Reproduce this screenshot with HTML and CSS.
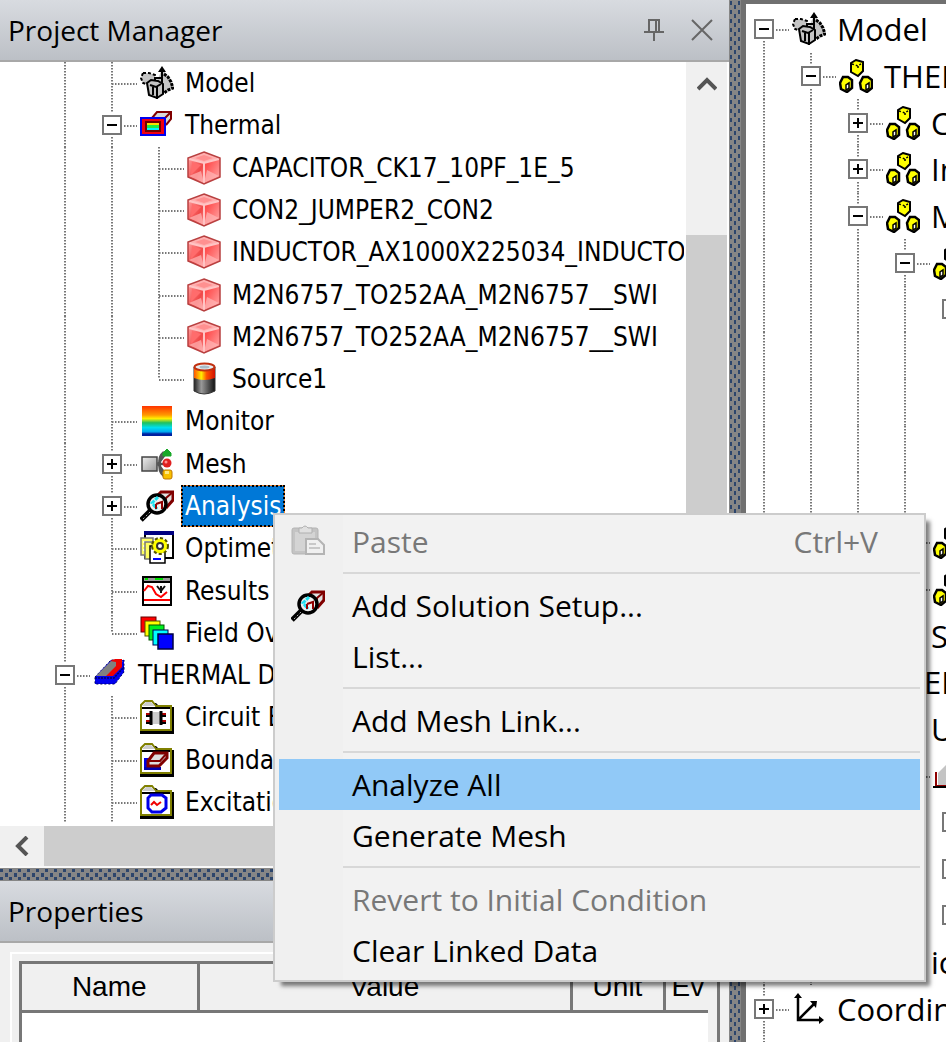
FILE: index.html
```html
<!DOCTYPE html>
<html lang="en">
<head>
  <meta charset="UTF-8">
  <meta name="viewport" content="width=device-width, initial-scale=1.0">
  <title>Project Manager</title>
  <link rel="stylesheet" href="styles.css">
</head>
<body>
  <!-- shared icons -->
  <svg class="sprite" aria-hidden="true">
    <defs>
      <linearGradient id="rainbow" x1="0" y1="0" x2="0" y2="1">
        <stop offset="0" stop-color="#ff3300"/>
        <stop offset=".3" stop-color="#ff9900"/>
        <stop offset=".42" stop-color="#fff000"/>
        <stop offset=".56" stop-color="#20c060"/>
        <stop offset=".72" stop-color="#00e0f0"/>
        <stop offset=".86" stop-color="#00a8f0"/>
        <stop offset=".93" stop-color="#0020a0"/>
        <stop offset="1" stop-color="#0020a0"/>
      </linearGradient>
      <linearGradient id="cubeL" x1="0" y1="0" x2="1" y2="1">
        <stop offset="0" stop-color="#ff9c9c"/>
        <stop offset=".6" stop-color="#f04848"/>
        <stop offset="1" stop-color="#ff9090"/>
      </linearGradient>
      <linearGradient id="cubeR" x1="0" y1="0" x2="1" y2="1">
        <stop offset="0" stop-color="#ff3434"/>
        <stop offset="1" stop-color="#ffb0b0"/>
      </linearGradient>
      <linearGradient id="battery" x1="0" y1="0" x2="1" y2="0">
        <stop offset="0" stop-color="#222"/>
        <stop offset=".35" stop-color="#999"/>
        <stop offset="1" stop-color="#111"/>
      </linearGradient>
      <linearGradient id="batteryTop" x1="0" y1="0" x2="1" y2="0">
        <stop offset="0" stop-color="#ff5500"/>
        <stop offset=".35" stop-color="#ffee00"/>
        <stop offset=".6" stop-color="#ff5000"/>
        <stop offset="1" stop-color="#d01000"/>
      </linearGradient>
      <linearGradient id="steel" x1="0" y1="0" x2="1" y2="1">
        <stop offset="0" stop-color="#eee"/>
        <stop offset="1" stop-color="#999"/>
      </linearGradient>
    </defs>
    <symbol id="i-model" viewBox="0 0 34 34">
      <path d="M3 7H9L15 9V16L9 19L3 17L1 12Z" fill="#c4c4c4" stroke="#000" stroke-width="2" stroke-dasharray="3 2"/>
      <path d="M22 3L17 15L21 27L27 25L33 22L31 15L27 9Z" fill="#c4c4c4"/>
      <path d="M24 8L28 11L31 16L33 22L28 24L24 27" fill="none" stroke="#000" stroke-width="3" stroke-dasharray="3 1"/>
      <path d="M7 17L11 14L18 15L23 18V28L17 32L9 29Z" fill="#c4c4c4" stroke="#000" stroke-width="2"/>
      <path d="M10 19L16 21L21 18M17 21V33M13 21V29" fill="none" stroke="#000" stroke-width="2"/>
      <path d="M22 0L18 6H26Z" fill="#000"/>
      <path d="M22 4V18M14 12H22" fill="none" stroke="#000" stroke-width="2"/>
    </symbol>
    <symbol id="i-thermal" viewBox="0 0 34 34">
      <path d="M12 10L17 4H31V11L26 17" fill="#d8d8d8" stroke="#800000" stroke-width="2"/>
      <path d="M31 4L25 10H12" fill="none" stroke="#800000" stroke-width="2"/>
      <rect x="1" y="10" width="24" height="17" fill="#f00010" stroke="#0000f0" stroke-width="2"/>
      <rect x="6" y="14" width="14" height="9" fill="#00f8ff" stroke="#700000" stroke-width="2"/>
      <rect x="7" y="15" width="12" height="2" fill="#ffe000"/>
      <rect x="7" y="17" width="12" height="3" fill="#20f040"/>
    </symbol>
    <symbol id="i-cube" viewBox="0 0 34 34">
      <path d="M1 7L17 12V33L1 26Z" fill="url(#cubeL)"/>
      <path d="M33 7L17 12V33L33 26Z" fill="url(#cubeR)"/>
      <path d="M17 1L33 7L17 12L1 7Z" fill="#ffb0b0"/>
      <path d="M17 4L26 7L17 10L8 7Z" fill="#ff9090"/>
      <path d="M5 11L14 14L4 24Z" fill="#ff6c6c"/>
      <path d="M2 25L14 20L17 32ZM32 25L20 19L17 32Z" fill="#ffb8b8" opacity=".7"/>
      <path d="M2 8L17 12L32 8M17 12V32" fill="none" stroke="#ffc4c4" stroke-width="2"/>
      <path d="M17 1L33 7V26L17 33L1 26V7Z" fill="none" stroke="#b84040" stroke-width="1.5"/>
    </symbol>
    <symbol id="i-source" viewBox="0 0 34 34">
      <path d="M7 5V29Q17 35 28 29V5Z" fill="url(#battery)" stroke="#333"/>
      <path d="M7 5V16Q17 20 28 16V5Z" fill="url(#batteryTop)"/>
      <ellipse cx="17.5" cy="5" rx="10" ry="3.5" fill="#e8eef2" stroke="#c03010" stroke-width="2"/>
      <ellipse cx="17.5" cy="5" rx="5" ry="1.5" fill="#a8bcc8"/>
    </symbol>
    <symbol id="i-monitor" viewBox="0 0 34 34">
      <rect x="2" y="2" width="30" height="30" fill="url(#rainbow)"/>
    </symbol>
    <symbol id="i-mesh" viewBox="0 0 34 34">
      <path d="M18 17L26 6M18 17H26M18 17L26 28M24 5Q18 10 20 17Q18 24 24 29" fill="none" stroke="#555" stroke-width="2.5"/>
      <rect x="2" y="10" width="15" height="14" fill="url(#steel)" stroke="#444" stroke-width="1.5"/>
      <path d="M27 2L31 6V9H23V6Z" fill="#18a828" stroke="#18a828"/>
      <circle cx="27" cy="16" r="4.5" fill="#e02020"/>
      <circle cx="26" cy="15" r="1.5" fill="#ff9090"/>
      <rect x="23" y="23" width="9" height="9" rx="2" fill="#f8c000" stroke="#c07800"/>
      <rect x="25" y="24" width="4" height="3" fill="#ffe880"/>
    </symbol>
    <symbol id="i-analysis" viewBox="0 0 34 34">
      <path d="M16 8L21 3H33V11L26 19" fill="#e0e0e0" stroke="#800000" stroke-width="3"/>
      <path d="M33 3L26 9V18" fill="none" stroke="#800000" stroke-width="2"/>
      <path d="M1 31L10 22" stroke="#000" stroke-width="5"/>
      <path d="M3 30L10 23" stroke="#aaa" stroke-width="1" stroke-dasharray="2 2"/>
      <circle cx="17" cy="15" r="9" fill="#f0f0f0" stroke="#000" stroke-width="3.5"/>
      <path d="M18 8L12 14L17 20" fill="none" stroke="#20e0f0" stroke-width="3" stroke-dasharray="4 1"/>
      <path d="M16 15L22 13V20M16 15V20" fill="none" stroke="#900000" stroke-width="2"/>
    </symbol>
    <symbol id="i-opti" viewBox="0 0 34 34">
      <rect x="5" y="1" width="28" height="26" fill="#fff" stroke="#000" stroke-width="2"/>
      <rect x="4" y="0" width="30" height="4" fill="#000080"/>
      <rect x="1" y="7" width="12" height="17" fill="#ffff60" stroke="#777" stroke-width="1.5"/>
      <path d="M3 11H11M3 15H9M3 19H9" stroke="#fff" stroke-width="1.5"/>
      <rect x="5" y="11" width="12" height="17" fill="#ffff60" stroke="#777" stroke-width="1.5"/>
      <path d="M10 15H18V18H25V32H10Z" fill="#fff" stroke="#000" stroke-width="1.5"/>
      <circle cx="20" cy="15" r="7.5" fill="#ff0" stroke="#555500" stroke-width="3" stroke-dasharray="3 2"/>
      <circle cx="20" cy="15" r="7" fill="#ff0"/>
      <circle cx="20" cy="15" r="3" fill="#fff" stroke="#333" stroke-width="2"/>
      <path d="M13 28H21" stroke="#0000ff" stroke-width="2"/>
    </symbol>
    <symbol id="i-results" viewBox="0 0 34 34">
      <rect x="3" y="3" width="28" height="28" fill="#fff" stroke="#000" stroke-width="2"/>
      <rect x="4" y="4" width="26" height="3" fill="#999"/>
      <path d="M5 5H8M15 5H23" stroke="#00e000" stroke-width="2"/>
      <path d="M3 8H31" stroke="#000" stroke-width="2"/>
      <path d="M4 17L8 12L12 13L16 20L21 23L27 18" fill="none" stroke="#f00" stroke-width="2"/>
      <path d="M17 12L21 17L25 12M21 12V19" fill="none" stroke="#111" stroke-width="2"/>
      <path d="M4 26H30" stroke="#f00" stroke-width="2"/>
    </symbol>
    <symbol id="i-field" viewBox="0 0 34 34">
      <rect x="1" y="1" width="15" height="15" fill="#f00" stroke="#600"/>
      <rect x="5" y="5" width="15" height="15" fill="#ff0" stroke="#550"/>
      <rect x="9" y="9" width="15" height="15" fill="#00f020" stroke="#050"/>
      <rect x="13" y="14" width="15" height="15" fill="#0ff" stroke="#005"/>
      <rect x="18" y="18" width="15" height="15" fill="#00f" stroke="#004" stroke-width="1.5"/>
    </symbol>
    <symbol id="i-design" viewBox="0 0 34 34">
      <path d="M2 19L18 2H31V14L22 26H2Z" fill="#0000f0" stroke="#000060" stroke-dasharray="2 2"/>
      <path d="M3 18L18 3H30L16 18Z" fill="#808080"/>
      <path d="M17 3L22 1H29V9L20 18H13L23 8V4Z" fill="#f00000"/>
      <path d="M2 20H21L31 9" fill="none" stroke="#000060" stroke-width="1.5" stroke-dasharray="2 1"/>
    </symbol>
    <symbol id="i-folder" viewBox="0 0 34 34">
      <path d="M6 3H16L20 7H34V34H0V30H2V8Z" fill="#000"/>
      <path d="M1 30V5L5 1H12L16 6H31V30Z" fill="#fff" stroke="#808000" stroke-width="2"/>
      <path d="M2 6L6 2H11L15 6Z" fill="#ccc"/>
      <path d="M2 8H30" stroke="#000" stroke-width="2"/>
    </symbol>
    <symbol id="i-circuit" viewBox="0 0 34 34">
      <use href="#i-folder"/>
      <path d="M6 14H13M19 14H26M6 21H13M19 21H26" stroke="#b00000" stroke-width="2"/>
      <path d="M6 16H10M22 16H26M6 23H10M22 23H26" stroke="#000" stroke-width="2"/>
      <rect x="12" y="12" width="8" height="12" fill="#ccc"/>
      <path d="M11 11V25M21 11V25" stroke="#000" stroke-width="3"/>
    </symbol>
    <symbol id="i-bound" viewBox="0 0 34 34">
      <use href="#i-folder"/>
      <path d="M4 15H13L8 20V26H18L14 27H4Z" fill="#0000e0"/>
      <path d="M4 24H21V27H4Z" fill="#0000b0"/>
      <path d="M8 18L14 10H27V15L19 23H8Z" fill="#ddd" stroke="#800000" stroke-width="3"/>
      <path d="M8 18H20L27 10" fill="none" stroke="#800000" stroke-width="2"/>
    </symbol>
    <symbol id="i-excite" viewBox="0 0 34 34">
      <use href="#i-folder"/>
      <path d="M11 10H22L26 13V23L21 27H12L8 23V13Z" fill="#fff" stroke="#0000e8" stroke-width="3"/>
      <path d="M11 20L14 17L17 20L21 17" fill="none" stroke="#f00000" stroke-width="2"/>
    </symbol>
    <symbol id="i-part" viewBox="0 0 34 34">
      <path d="M12 4L17 1L24 3V12L19 17L12 13Z" fill="#ff0" stroke="#000" stroke-width="2"/>
      <path d="M13 5L19 7L23 4M19 7V11" fill="none" stroke="#000" stroke-width="1.5" stroke-dasharray="2 2"/>
      <path d="M1 24L4 18H9L13 21V29L8 33L2 30Z" fill="#ff0" stroke="#000" stroke-width="2.5"/>
      <path d="M7 31V26L10 24V29Z" fill="#fff" stroke="#000" stroke-width="1.5"/>
      <path d="M21 24L24 18H29L33 21V29L28 33L22 30Z" fill="#ff0" stroke="#000" stroke-width="2.5"/>
      <path d="M27 31V26L30 24V29Z" fill="#fff" stroke="#000" stroke-width="1.5"/>
    </symbol>
    <symbol id="i-sheet" viewBox="0 0 34 34">
      <path d="M5 14L14 5H34V26H5Z" fill="#c4c4c4"/>
      <path d="M3 13V27H34" fill="none" stroke="#900000" stroke-width="2"/>
      <path d="M0 28H34" stroke="#000" stroke-width="2"/>
    </symbol>
    <symbol id="i-axes" viewBox="0 0 34 34">
      <path d="M6 5V28H30M6 28L22 12" fill="none" stroke="#000" stroke-width="2.5"/>
      <path d="M6 1L2 6H10ZM32 28L27 24V32ZM25 9H18L24 16Z" fill="#000"/>
    </symbol>
    <symbol id="i-paste" viewBox="0 0 34 34">
      <rect x="1" y="3" width="26" height="26" rx="2" fill="#c4c4c4" stroke="#b4b4b4"/>
      <rect x="4" y="7" width="20" height="19" fill="#d4d4d4"/>
      <path d="M8 3H11Q14 -1 17 3H21V8H8Z" fill="#e0e0e0" stroke="#b0b0b0"/>
      <path d="M15 14H27L33 20V29H15Z" fill="#f0f0f0" stroke="#b4b4b4" stroke-width="2"/>
      <path d="M18 19H25M18 23H29" stroke="#c8c8c8" stroke-width="2"/>
    </symbol>
  </svg>

  <div class="app">
    <div class="side">
      <section class="panel project">
        <header class="titlebar">
          <h2>Project Manager</h2>
          <button type="button" class="tool" aria-label="Auto hide">
            <svg viewBox="0 0 22 24"><path d="M6 13V2H16V13M13 2V13M1 14H21M11 14V23" fill="none" stroke="#666" stroke-width="2"/></svg>
          </button>
          <button type="button" class="tool" aria-label="Close">
            <svg viewBox="0 0 22 24"><path d="M1 2L21 22M21 2L1 22" fill="none" stroke="#666" stroke-width="2"/></svg>
          </button>
        </header>
        <div class="scroll-area">
          <ul class="tree" role="tree" aria-label="Project">
            <li class="row" role="treeitem"><i class="g v"></i><i class="g v h"></i><svg class="icon"><use href="#i-model"/></svg><span class="label">Model</span></li>
            <li class="row" role="treeitem"><i class="g v"></i><i class="g v h"><button type="button" class="toggle" aria-label="Collapse"></button></i><svg class="icon"><use href="#i-thermal"/></svg><span class="label">Thermal</span></li>
            <li class="row" role="treeitem"><i class="g v"></i><i class="g v"></i><i class="g v h"></i><svg class="icon"><use href="#i-cube"/></svg><span class="label">CAPACITOR_CK17_10PF_1E_5</span></li>
            <li class="row" role="treeitem"><i class="g v"></i><i class="g v"></i><i class="g v h"></i><svg class="icon"><use href="#i-cube"/></svg><span class="label">CON2_JUMPER2_CON2</span></li>
            <li class="row" role="treeitem"><i class="g v"></i><i class="g v"></i><i class="g v h"></i><svg class="icon"><use href="#i-cube"/></svg><span class="label">INDUCTOR_AX1000X225034_INDUCTOR</span></li>
            <li class="row" role="treeitem"><i class="g v"></i><i class="g v"></i><i class="g v h"></i><svg class="icon"><use href="#i-cube"/></svg><span class="label">M2N6757_TO252AA_M2N6757__SWI</span></li>
            <li class="row" role="treeitem"><i class="g v"></i><i class="g v"></i><i class="g v h"></i><svg class="icon"><use href="#i-cube"/></svg><span class="label">M2N6757_TO252AA_M2N6757__SWI</span></li>
            <li class="row" role="treeitem"><i class="g v"></i><i class="g v"></i><i class="g v end h"></i><svg class="icon"><use href="#i-source"/></svg><span class="label">Source1</span></li>
            <li class="row" role="treeitem"><i class="g v"></i><i class="g v h"></i><svg class="icon"><use href="#i-monitor"/></svg><span class="label">Monitor</span></li>
            <li class="row" role="treeitem"><i class="g v"></i><i class="g v h"><button type="button" class="toggle plus" aria-label="Expand"></button></i><svg class="icon"><use href="#i-mesh"/></svg><span class="label">Mesh</span></li>
            <li class="row" role="treeitem" aria-selected="true"><i class="g v"></i><i class="g v h"><button type="button" class="toggle plus" aria-label="Expand"></button></i><svg class="icon"><use href="#i-analysis"/></svg><span class="label selected">Analysis</span></li>
            <li class="row" role="treeitem"><i class="g v"></i><i class="g v h"></i><svg class="icon"><use href="#i-opti"/></svg><span class="label">Optimetrics</span></li>
            <li class="row" role="treeitem"><i class="g v"></i><i class="g v h"></i><svg class="icon"><use href="#i-results"/></svg><span class="label">Results</span></li>
            <li class="row" role="treeitem"><i class="g v"></i><i class="g v end h"></i><svg class="icon"><use href="#i-field"/></svg><span class="label">Field Overlays</span></li>
            <li class="row" role="treeitem"><i class="g v h"><button type="button" class="toggle" aria-label="Collapse"></button></i><svg class="icon"><use href="#i-design"/></svg><span class="label">THERMAL D</span></li>
            <li class="row" role="treeitem"><i class="g v"></i><i class="g v h"></i><svg class="icon"><use href="#i-circuit"/></svg><span class="label">Circuit Elements</span></li>
            <li class="row" role="treeitem"><i class="g v"></i><i class="g v h"></i><svg class="icon"><use href="#i-bound"/></svg><span class="label">Boundaries</span></li>
            <li class="row" role="treeitem"><i class="g v"></i><i class="g v h"></i><svg class="icon"><use href="#i-excite"/></svg><span class="label">Excitations</span></li>
          </ul>
          <div class="vbar">
            <button type="button" class="arrow" aria-label="Scroll up">
              <svg viewBox="0 0 20 14"><path d="M1 12L10 3L19 12" fill="none" stroke="#555" stroke-width="4"/></svg>
            </button>
            <div class="thumb"></div>
          </div>
        </div>
        <div class="hbar">
          <button type="button" class="arrow" aria-label="Scroll left">
            <svg viewBox="0 0 14 20"><path d="M12 1L3 10L12 19" fill="none" stroke="#555" stroke-width="4"/></svg>
          </button>
          <div class="thumb"></div>
        </div>
      </section>

      <div class="splitter-h"></div>

      <section class="panel properties">
        <header class="titlebar">
          <h2>Properties</h2>
        </header>
        <div class="sheet">
          <div class="frame">
            <table>
              <thead>
                <tr><th class="c-name">Name</th><th>Value</th><th class="c-unit">Unit</th><th class="c-eval">Ev</th></tr>
              </thead>
            </table>
          </div>
        </div>
      </section>
    </div>

    <div class="splitter-v"></div>

    <section class="model-pane">
      <ul class="tree" role="tree" aria-label="Model">
        <li class="row" role="treeitem"><i class="g v start h"><button type="button" class="toggle" aria-label="Collapse"></button></i><svg class="icon"><use href="#i-model"/></svg><span class="label">Model</span></li>
        <li class="row" role="treeitem"><i class="g v"></i><i class="g v h"><button type="button" class="toggle" aria-label="Collapse"></button></i><svg class="icon"><use href="#i-part"/></svg><span class="label">THERMAL</span></li>
        <li class="row" role="treeitem"><i class="g v"></i><i class="g v"></i><i class="g v h"><button type="button" class="toggle plus" aria-label="Expand"></button></i><svg class="icon"><use href="#i-part"/></svg><span class="label">C</span></li>
        <li class="row" role="treeitem"><i class="g v"></i><i class="g v"></i><i class="g v h"><button type="button" class="toggle plus" aria-label="Expand"></button></i><svg class="icon"><use href="#i-part"/></svg><span class="label">In</span></li>
        <li class="row" role="treeitem"><i class="g v"></i><i class="g v"></i><i class="g v h"><button type="button" class="toggle" aria-label="Collapse"></button></i><svg class="icon"><use href="#i-part"/></svg><span class="label">M</span></li>
        <li class="row" role="treeitem"><i class="g v"></i><i class="g v"></i><i class="g v"></i><i class="g v h"><button type="button" class="toggle" aria-label="Collapse"></button></i><svg class="icon"><use href="#i-part"/></svg></li>
        <li class="row" role="treeitem"><i class="g v"></i><i class="g v"></i><i class="g v"></i><i class="g v"></i><i class="g v"><button type="button" class="toggle" aria-label="Collapse"></button></i></li>
        <li class="row" role="treeitem"><i class="g v"></i><i class="g v"></i><i class="g v"></i><i class="g v"></i></li>
        <li class="row" role="treeitem"><i class="g v"></i><i class="g v"></i><i class="g v"></i><i class="g v"></i></li>
        <li class="row" role="treeitem"><i class="g v"></i><i class="g v"></i><i class="g v"></i><i class="g v"></i></li>
        <li class="row" role="treeitem"><i class="g v"></i><i class="g v"></i><i class="g v"></i><i class="g v"></i></li>
        <li class="row" role="treeitem"><i class="g v"></i><i class="g v"></i><i class="g v"></i><i class="g v h"></i><svg class="icon"><use href="#i-part"/></svg></li>
        <li class="row" role="treeitem"><i class="g v"></i><i class="g v"></i><i class="g v"></i><i class="g v end h"></i><svg class="icon"><use href="#i-part"/></svg></li>
        <li class="row" role="treeitem"><i class="g v"></i><i class="g v"></i><i class="g v h"></i><svg class="icon"><use href="#i-part"/></svg><span class="label">S</span></li>
        <li class="row" role="treeitem"><i class="g v"></i><i class="g v h"></i><svg class="icon"><use href="#i-part"/></svg><span class="label">THERMAL</span></li>
        <li class="row" role="treeitem"><i class="g v"></i><i class="g v"></i><i class="g v h"></i><svg class="icon"><use href="#i-part"/></svg><span class="label">U</span></li>
        <li class="row" role="treeitem"><i class="g v"></i><i class="g v"></i><i class="g v"></i><i class="g v h"></i><svg class="icon"><use href="#i-sheet"/></svg></li>
        <li class="row" role="treeitem"><i class="g v"></i><i class="g v"></i><i class="g v"></i><i class="g v"></i><i class="g v"><button type="button" class="toggle plus" aria-label="Expand"></button></i></li>
        <li class="row" role="treeitem"><i class="g v"></i><i class="g v"></i><i class="g v"></i><i class="g v"></i><i class="g v"><button type="button" class="toggle plus" aria-label="Expand"></button></i></li>
        <li class="row" role="treeitem"><i class="g v"></i><i class="g v"></i><i class="g v"></i><i class="g v"></i><i class="g v"><button type="button" class="toggle plus" aria-label="Expand"></button></i></li>
        <li class="row" role="treeitem"><i class="g v"></i><i class="g v"></i><i class="g h"></i><i class="g"></i><span class="label">ic</span></li>
        <li class="row" role="treeitem"><i class="g v h"><button type="button" class="toggle plus" aria-label="Expand"></button></i><svg class="icon"><use href="#i-axes"/></svg><span class="label">Coordinate Systems</span></li>
        <li class="row tail" role="presentation"><i class="g v"></i></li>
      </ul>
    </section>
  </div>

  <div class="menu" role="menu">
    <button type="button" role="menuitem" disabled><svg class="icon"><use href="#i-paste"/></svg><span>Paste</span><kbd>Ctrl+V</kbd></button>
    <hr>
    <button type="button" role="menuitem"><svg class="icon"><use href="#i-analysis"/></svg><span>Add Solution Setup...</span></button>
    <button type="button" role="menuitem"><span>List...</span></button>
    <hr>
    <button type="button" role="menuitem"><span>Add Mesh Link...</span></button>
    <hr>
    <button type="button" role="menuitem" class="active"><span>Analyze All</span></button>
    <button type="button" role="menuitem"><span>Generate Mesh</span></button>
    <hr>
    <button type="button" role="menuitem" disabled><span>Revert to Initial Condition</span></button>
    <button type="button" role="menuitem"><span>Clear Linked Data</span></button>
  </div>
</body>
</html>
```
FILE: styles.css
```css
* {
  box-sizing: border-box;
}

body {
  margin: 0;
  font-family: "Open Sans", "Noto Sans", sans-serif;
  color: #000;
  background: #f0f0f0;
  overflow: hidden;
}

button {
  font: inherit;
  color: inherit;
  padding: 0;
  border: none;
  background: none;
}

.sprite {
  position: absolute;
  width: 0;
  height: 0;
}

.app {
  display: flex;
  height: 100vh;
}

.side {
  flex: 1;
  min-width: 0;
  display: flex;
  flex-direction: column;
}

.panel {
  display: flex;
  flex-direction: column;
  min-height: 0;
}

.project {
  flex: 1;
}

.titlebar {
  display: flex;
  align-items: center;
  gap: 26px;
  height: 62px;
  padding: 0 16px 0 8px;
  background: linear-gradient(#d8dbe0, #bcc0c6);
  border-bottom: 2px solid #a8a8a8;
  flex: none;
}

.titlebar h2 {
  flex: 1;
  margin: 0;
  font-size: 28px;
  font-weight: normal;
}

.tool svg {
  display: block;
  width: 22px;
  height: 24px;
}

/* tree */
.scroll-area {
  flex: 1;
  min-height: 0;
  display: flex;
  background: #fff;
}

.tree {
  flex: 1;
  min-width: 0;
  display: flex;
  flex-direction: column;
  list-style: none;
  margin: 0;
  padding: 0;
  overflow: hidden;
}

.row {
  flex: 1;
  min-height: 0;
  display: flex;
  align-items: center;
}

.side .tree {
  font-family: "DejaVu Sans Condensed", "DejaVu Sans", sans-serif;
  font-size: 26px;
  padding: 0 0 3px 41px;
  margin-right: 2px;
}

.g {
  position: relative;
  flex: none;
  align-self: stretch;
  width: 47px;
  display: flex;
  align-items: center;
  justify-content: center;
}

/* dotted guides */
.g.v::before {
  content: "";
  position: absolute;
  left: 23px;
  top: 0;
  bottom: 0;
  width: 2px;
  background: repeating-linear-gradient(#777 0 1px, #bbb 1px 2px, #fff 2px 3px);
}

.g.end::before {
  bottom: 50%;
}

.g.start::before {
  top: 50%;
}

.g.h::after {
  content: "";
  position: absolute;
  left: 24px;
  right: -2px;
  top: 50%;
  height: 2px;
  background: repeating-linear-gradient(90deg, #777 0 1px, #bbb 1px 2px, #fff 2px 3px);
}

.toggle {
  position: relative;
  z-index: 1;
  flex: none;
  width: 20px;
  height: 20px;
  border: 2px solid #777;
  outline: 2px solid #fff;
  background: linear-gradient(#000, #000) center / 10px 2px no-repeat #fff;
}

.toggle.plus {
  background: linear-gradient(#000, #000) center / 10px 2px no-repeat, linear-gradient(#000, #000) center / 2px 10px no-repeat #fff;
}

.icon {
  flex: none;
  width: 34px;
  height: 34px;
}

.row .icon {
  margin: 0 8px 0 5px;
}

.label {
  height: 40px;
  line-height: 40px;
  padding: 0 3px;
  white-space: nowrap;
}

.label.selected {
  color: #fff;
  background: #0078d7;
  box-shadow: 0 0 0 1px #ff8728;
  outline: 2px dotted #000;
  outline-offset: -1px;
}

/* scrollbars */
.vbar {
  flex: none;
  width: 41px;
  margin-right: 2px;
  display: flex;
  flex-direction: column;
  background: #f0f0f0;
}

.hbar {
  flex: none;
  height: 42px;
  padding-right: 43px;
  border-bottom: 2px solid #f8f8f8;
  display: flex;
  background: #f0f0f0;
}

.arrow {
  display: flex;
  align-items: center;
  justify-content: center;
}

.vbar .arrow {
  height: 44px;
}

.vbar .arrow svg {
  width: 20px;
  height: 14px;
}

.hbar .arrow {
  width: 44px;
}

.hbar .arrow svg {
  width: 14px;
  height: 20px;
}

.thumb {
  background: #cdcdcd;
}

.vbar .thumb {
  flex: 1;
  margin: 129px 0 44px;
}

.hbar .thumb {
  flex: 1;
  margin-right: 160px;
}

/* splitters */
.splitter-h,
.splitter-v {
  flex: none;
  background-color: #868686;
}

.splitter-h {
  height: 13px;
  background-image: url("data:image/svg+xml,%3Csvg xmlns='http://www.w3.org/2000/svg' width='9' height='13'%3E%3Cpath d='M0 1h3v3h-3zM5 5h3v4h-3zM0 9h3v3h-3z' fill='%232c456c'/%3E%3C/svg%3E");
}

.splitter-v {
  width: 12px;
  background-image: url("data:image/svg+xml,%3Csvg xmlns='http://www.w3.org/2000/svg' width='12' height='9'%3E%3Cpath d='M1 1h2v4h-2zM5 5h2v4h-2zM9 1h2v4h-2z' fill='%232c456c'/%3E%3C/svg%3E");
}

/* properties */
.properties {
  flex: none;
  height: 161px;
}

.sheet {
  flex: 1;
  margin: 9px 0 0 10px;
  padding: 7px 9px 0 7px;
  border-top: 2px solid #fff;
  border-left: 2px solid #fff;
}

.frame {
  height: 100%;
  padding-right: 9px;
  border: 3px solid #777;
  border-bottom: none;
  background: linear-gradient(90deg, #fff calc(100% - 9px), #f0f0f0 calc(100% - 9px));
  overflow: hidden;
}

.frame table {
  width: 100%;
  table-layout: fixed;
  border-collapse: collapse;
}

.frame th {
  height: 47px;
  padding: 0 6px;
  background: #f0f0f0;
  border-right: 3px solid #777;
  border-bottom: 3px solid #777;
  font: 28px "Liberation Sans", sans-serif;
}

.frame .c-name {
  width: 176px;
}

.frame .c-unit {
  width: 93px;
}

.frame .c-eval {
  width: 44px;
  text-align: left;
  border-right: none;
}

/* model pane */
.model-pane {
  flex: none;
  width: 205px;
  display: flex;
  background: #fff;
  border-top: 4px solid #707070;
  border-left: 5px solid #707070;
}

.model-pane .tree {
  margin-left: -6px;
  padding-top: 2px;
  font-size: 31px;
}

.model-pane .row.tail {
  flex: none;
  height: 10px;
}

/* context menu */
.menu {
  position: absolute;
  left: 273px;
  top: 513px;
  width: 653px;
  padding: 1px 4px 4px;
  border: 2px solid #ccc;
  background: linear-gradient(90deg, #f0f0f0 68px, #f2f2f2 68px);
  box-shadow: 6px 6px 4px -2px rgba(0, 0, 0, 0.5);
  font-size: 30px;
}

.menu button {
  display: grid;
  grid-template-columns: 64px 1fr auto;
  column-gap: 9px;
  align-items: center;
  width: 100%;
  height: 51px;
  padding-right: 42px;
  line-height: 48px;
  text-align: left;
  white-space: nowrap;
}

.menu button span {
  grid-column: 2;
}

.menu button .icon {
  margin-left: 12px;
}

.menu kbd {
  font: inherit;
}

.menu button:disabled {
  color: #787878;
}

.menu .active {
  background: #91c9f7;
}

.menu hr {
  height: 2px;
  margin: 5px 0 6px 64px;
  border: none;
  background: #d8d8d8;
}
```
